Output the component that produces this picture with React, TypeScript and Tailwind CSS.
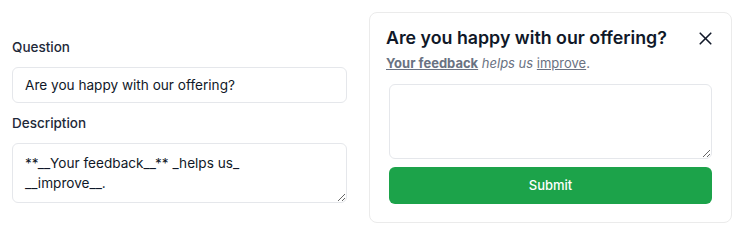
import { X } from "lucide-react";

const font = { fontFamily: "Inter, 'Noto Sans', sans-serif" };

export default function App() {
  return (
    <div style={font} className="flex h-[235px] w-[741px] items-start bg-white pl-[12px] pt-[12px] text-gray-900">
      <div className="mt-[25px] flex w-[335px] flex-col">
        <label className="text-[13.5px] leading-[20px] font-medium text-gray-800">Question</label>
        <input
          readOnly
          value="Are you happy with our offering?"
          className="mt-[10px] h-[36px] w-full rounded-md border border-gray-200 px-[12px] text-[13.6px] text-gray-900 outline-none"
        />
        <label className="mt-[10px] text-[13.5px] leading-[20px] font-medium text-gray-800">Description</label>
        <textarea
          readOnly
          value="**__Your feedback__** _helps us_ __improve__."
          className="mt-[10px] h-[60px] w-full rounded-md border border-gray-200 pl-[12px] pr-[60px] py-[9px] text-[13.6px] leading-[20px] text-gray-900 outline-none"
        />
      </div>

      <div className="ml-[22px] flex h-[211px] w-[363px] flex-col rounded-lg border border-[#ebebeb] bg-white">
        <div className="flex items-center justify-between pl-[16px] pr-[15px] pt-[13px]">
          <h2 className="text-[17.8px] leading-[24px] font-semibold text-gray-900">Are you happy with our offering?</h2>
          <X className="h-[21px] w-[21px] text-gray-900" strokeWidth={1.9} />
        </div>
        <p className="pl-[16px] pt-[4px] text-[13px] leading-[18px] text-gray-500">
          <span className="font-bold underline">Your feedback</span> <em>helps us</em>{" "}
          <span className="underline">improve</span>.
        </p>
        <div className="flex flex-col px-[19px] pt-[12px]">
          <textarea className="h-[75px] w-full rounded-md border border-gray-200 px-[12px] py-[9px] text-[14px] outline-none" />
          <button className="mt-[8px] h-[37px] w-full rounded-md bg-[#1ca34a] text-[13px] font-medium text-white">
            Submit
          </button>
        </div>
      </div>
    </div>
  );
}
